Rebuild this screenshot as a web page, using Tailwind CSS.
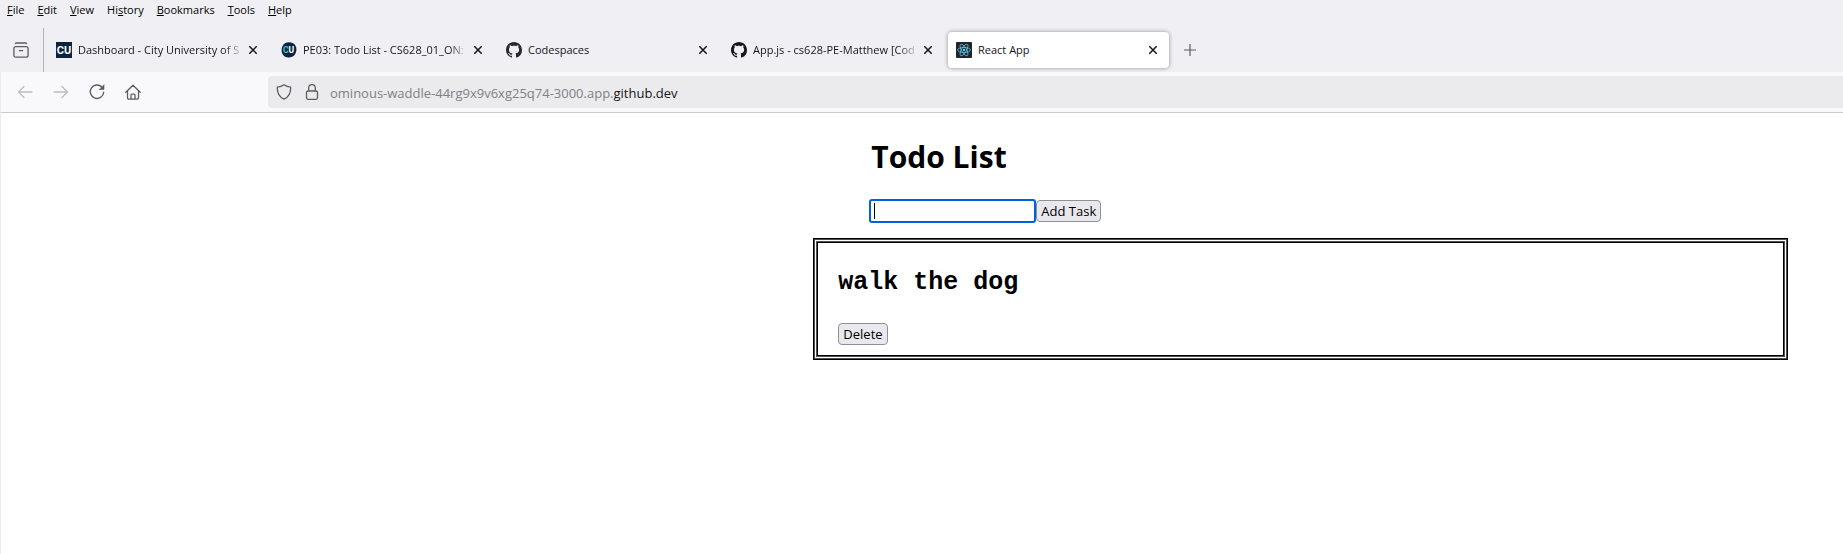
<!DOCTYPE html>
<html lang="en">
<head>
<meta charset="utf-8">
<meta name="viewport" content="width=device-width, initial-scale=1">
<title>React App</title>
<script src="https://cdn.jsdelivr.net/npm/@tailwindcss/browser@4"></script>
</head>
<body class="flex min-h-screen flex-col overflow-x-hidden bg-white font-['Open_Sans','Noto_Sans',sans-serif] text-[#15141a]">
<svg class="hidden" aria-hidden="true">
  <symbol id="close" viewBox="0 0 10 10"><path d="M1.3 1.3l7.4 7.4M8.7 1.3l-7.4 7.4" stroke="currentColor" stroke-width="1.500" fill="none"/></symbol>
  <symbol id="github" viewBox="0 0 16 16"><path fill="currentColor" d="M8 0C3.58 0 0 3.58 0 8c0 3.54 2.29 6.53 5.47 7.59.4.07.55-.17.55-.38 0-.19-.01-.82-.01-1.49-2.01.37-2.53-.49-2.69-.94-.09-.23-.48-.94-.82-1.13-.28-.15-.68-.52-.01-.53.63-.01 1.08.58 1.23.82.72 1.21 1.87.87 2.33.66.07-.52.28-.87.51-1.07-1.78-.2-3.64-.89-3.64-3.95 0-.87.31-1.59.82-2.15-.08-.2-.36-1.02.08-2.12 0 0 .67-.21 2.2.82.64-.18 1.32-.27 2-.27s1.36.09 2 .27c1.53-1.04 2.2-.82 2.2-.82.44 1.1.16 1.92.08 2.12.51.56.82 1.27.82 2.15 0 3.07-1.87 3.75-3.65 3.95.29.25.54.73.54 1.48 0 1.07-.01 1.93-.01 2.2 0 .21.15.46.55.38A8.01 8.01 0 0 0 16 8c0-4.42-3.58-8-8-8z"/></symbol>
</svg>

<header class="bg-[#f0f0f4]">
  <nav class="flex h-5 items-center gap-[13px] pl-[7px] text-[11px] leading-4 text-black" aria-label="Menu bar">
    <button><u>F</u>ile</button>
    <button><u>E</u>dit</button>
    <button><u>V</u>iew</button>
    <button>Hi<u>s</u>tory</button>
    <button><u>B</u>ookmarks</button>
    <button><u>T</u>ools</button>
    <button><u>H</u>elp</button>
  </nav>

  <div class="flex h-[52px] items-center pt-2 text-[11px] leading-4">
    <button class="flex w-11 shrink-0 items-center justify-center self-stretch border-r border-[#b4b4ba] pr-0.5 text-[#5b5b66]" aria-label="Recently closed tabs">
      <svg class="h-4 w-4" viewBox="0 0 16 16" fill="none" stroke="currentColor" stroke-width="1.300" stroke-linecap="round"><path d="M2.400 1.600A1.500 1.500 0 0 1 3.500 1h9a1.500 1.500 0 0 1 1.100.6"/><rect x=".9" y="4.600" width="14.200" height="10.600" rx="2"/><path d="M6.300 8.600h3.400"/></svg>
    </button>
    <div class="flex min-w-0 items-center gap-1 pl-1" role="tablist">
      <div class="flex h-9 w-[221px] items-center pr-[11px] pl-2" role="tab">
        <svg class="h-4 w-4 shrink-0" viewBox="0 0 16 16"><rect width="16" height="16" fill="#0b2340"/><text x="8" y="12" text-anchor="middle" font-family="Roboto" font-weight="700" font-size="11" fill="#fff">CU</text></svg>
        <span class="ml-1.5 min-w-0 flex-1 overflow-hidden whitespace-nowrap [mask-image:linear-gradient(to_left,transparent,black_20px)]">Dashboard - City University of S</span>
        <button class="ml-1 shrink-0" aria-label="Close tab"><svg class="h-2.5 w-2.5"><use href="#close"/></svg></button>
      </div>
      <div class="flex h-9 w-[221px] items-center pr-[11px] pl-2" role="tab">
        <svg class="h-4 w-4 shrink-0" viewBox="0 0 16 16"><path d="M4 1.200Q8-.6 12.200 1.300Q16 4 15.300 9Q14.500 14.500 8.500 15.500Q3 15.800 1 11Q-.5 4.500 4 1.200z" fill="#0b2340"/><text x="2" y="11" font-family="Roboto" font-weight="700" font-size="8.500" fill="#3cc6c8">C</text><text x="7.600" y="11" font-family="Roboto" font-weight="700" font-size="8.500" fill="#fff">U</text></svg>
        <span class="ml-1.5 min-w-0 flex-1 overflow-hidden whitespace-nowrap [mask-image:linear-gradient(to_left,transparent,black_20px)]">PE03: Todo List - CS628_01_ON:</span>
        <button class="ml-1 shrink-0" aria-label="Close tab"><svg class="h-2.5 w-2.5"><use href="#close"/></svg></button>
      </div>
      <div class="flex h-9 w-[221px] items-center pr-[11px] pl-2" role="tab">
        <svg class="h-4 w-4 shrink-0 text-[#24292f]"><use href="#github"/></svg>
        <span class="ml-1.5 min-w-0 flex-1 overflow-hidden whitespace-nowrap">Codespaces</span>
        <button class="ml-1 shrink-0" aria-label="Close tab"><svg class="h-2.5 w-2.5"><use href="#close"/></svg></button>
      </div>
      <div class="flex h-9 w-[221px] items-center pr-[11px] pl-2" role="tab">
        <svg class="h-4 w-4 shrink-0 text-[#191717]"><use href="#github"/></svg>
        <span class="ml-1.5 min-w-0 flex-1 overflow-hidden whitespace-nowrap [mask-image:linear-gradient(to_left,transparent,black_20px)]">App.js - cs628-PE-Matthew [Cod</span>
        <button class="ml-1 shrink-0" aria-label="Close tab"><svg class="h-2.5 w-2.5"><use href="#close"/></svg></button>
      </div>
      <div class="flex h-9 w-[221px] items-center rounded bg-white pr-[11px] pl-2 shadow-[0_0_4px_rgba(0,0,0,0.4)]" role="tab" aria-selected="true">
        <svg class="h-4 w-4 shrink-0" viewBox="0 0 16 16"><rect width="16" height="16" rx="1" fill="#20232a"/><g fill="none" stroke="#61dafb" stroke-width=".7"><ellipse cx="8" cy="8" rx="6.500" ry="2.500"/><ellipse cx="8" cy="8" rx="6.500" ry="2.500" transform="rotate(60 8 8)"/><ellipse cx="8" cy="8" rx="6.500" ry="2.500" transform="rotate(120 8 8)"/></g><circle cx="8" cy="8" r="1.200" fill="#61dafb"/></svg>
        <span class="ml-1.5 min-w-0 flex-1 overflow-hidden whitespace-nowrap">React App</span>
        <button class="ml-1 shrink-0" aria-label="Close tab"><svg class="h-2.5 w-2.5"><use href="#close"/></svg></button>
      </div>
    </div>
    <button class="ml-[15px] text-[#5b5b66]" aria-label="New tab"><svg class="h-3 w-3" viewBox="0 0 12 12" stroke="currentColor" stroke-width="1.200"><path d="M6 0v12M0 6h12"/></svg></button>
  </div>
</header>

<div class="flex flex-1 flex-col border-l border-[#ebebef]">
  <div class="flex items-center border-b border-[#cccccf] bg-[#f9f9fb] py-1">
    <div class="flex w-[267px] shrink-0 items-center gap-5 pl-4 text-[#5b5b66]">
      <button class="text-[#bdbdc2]" aria-label="Back"><svg class="h-4 w-4" viewBox="0 0 16 16" fill="none" stroke="currentColor" stroke-width="1.300" stroke-linecap="round" stroke-linejoin="round"><path d="M15 8H1.500M7 2.500L1.500 8L7 13.500"/></svg></button>
      <button class="text-[#bdbdc2]" aria-label="Forward"><svg class="h-4 w-4" viewBox="0 0 16 16" fill="none" stroke="currentColor" stroke-width="1.300" stroke-linecap="round" stroke-linejoin="round"><path d="M1 8h13.500M9 2.500L14.500 8L9 13.500"/></svg></button>
      <button aria-label="Reload"><svg class="h-4 w-4" viewBox="0 0 16 16" fill="none" stroke="currentColor" stroke-width="1.400" stroke-linecap="round"><path d="M12.800 3A6.700 6.700 0 1 0 14.700 8.200"/><path d="M15 1v4.500h-4.500z" fill="currentColor" stroke-width=".6" stroke-linejoin="round"/></svg></button>
      <button aria-label="Home"><svg class="h-4 w-4" viewBox="0 0 16 16" fill="none" stroke="currentColor" stroke-width="1.300" stroke-linecap="round" stroke-linejoin="round"><path d="M.8 8.300L8 1.200l7.200 7.100M2.500 7v6.800a1.300 1.300 0 0 0 1.300 1.300h8.400a1.300 1.300 0 0 0 1.300-1.300V7M6 15v-3.800a1 1 0 0 1 1-1h2a1 1 0 0 1 1 1V15"/></svg></button>
    </div>
    <div class="flex h-8 min-w-0 flex-1 items-center rounded-l bg-[#ebebed] pl-2 text-[#5b5b66]">
      <svg class="h-4 w-4 shrink-0" viewBox="0 0 16 16" fill="none" stroke="currentColor" stroke-width="1.300" stroke-linejoin="round"><path d="M8 .8c2 1.400 4.200 2.100 6.700 2.300C15 9 12.600 13 8 15.200C3.400 13 1 9 1.300 3.100C3.800 2.900 6 2.200 8 .8z"/></svg>
      <svg class="ml-3 h-4 w-4 shrink-0" viewBox="0 0 16 16" fill="none" stroke="currentColor" stroke-width="1.300"><rect x="2.500" y="7" width="11" height="8.300" rx="1.500"/><path d="M4.700 7V4a3.300 3.300 0 0 1 6.600 0v3"/></svg>
      <span class="ml-2.5 pt-0.5 text-[13px] leading-5 whitespace-nowrap text-[#808085]">ominous-waddle-44rg9x9v6xg25q74-3000.app.<span class="text-[#15141a]">github.dev</span></span>
    </div>
  </div>

  <main class="mr-[3%] ml-[44.1%] pt-6 text-black">
    <h1 class="pl-[58px] text-[30px] leading-10 font-bold">Todo List</h1>
    <form class="mt-[22px] flex items-center pl-14">
      <label class="relative flex">
        <input type="text" aria-label="New task" class="h-6 w-[167px] rounded-[3px] border-2 border-[#0060df] bg-white px-[3px] text-[13px] caret-black outline-none">
        <span class="absolute top-1 left-[5px] h-4 w-px bg-black"></span>
      </label>
      <button type="button" class="h-[22px] rounded border border-[#8f8f9d] bg-[#e9e9ed] px-1 text-[13px] leading-5 whitespace-nowrap">Add Task</button>
    </form>
    <!-- Double frame with softened inner edges -->
    <section class="mt-[15px] border border-black px-6 pt-[30px] pb-3.5 shadow-[inset_0_0_0_1px_#505050,inset_0_0_0_2px_#fff,inset_0_0_0_3px_#505050,inset_0_0_0_4px_#000]">
      <h2 class="font-['Liberation_Mono',monospace] text-[25px] leading-7 font-bold">walk the dog</h2>
      <button class="mt-[26px] block h-[22px] rounded border border-[#8f8f9d] bg-[#e9e9ed] px-1 text-[13px] leading-5">Delete</button>
    </section>
  </main>
</div>
</body>
</html>
